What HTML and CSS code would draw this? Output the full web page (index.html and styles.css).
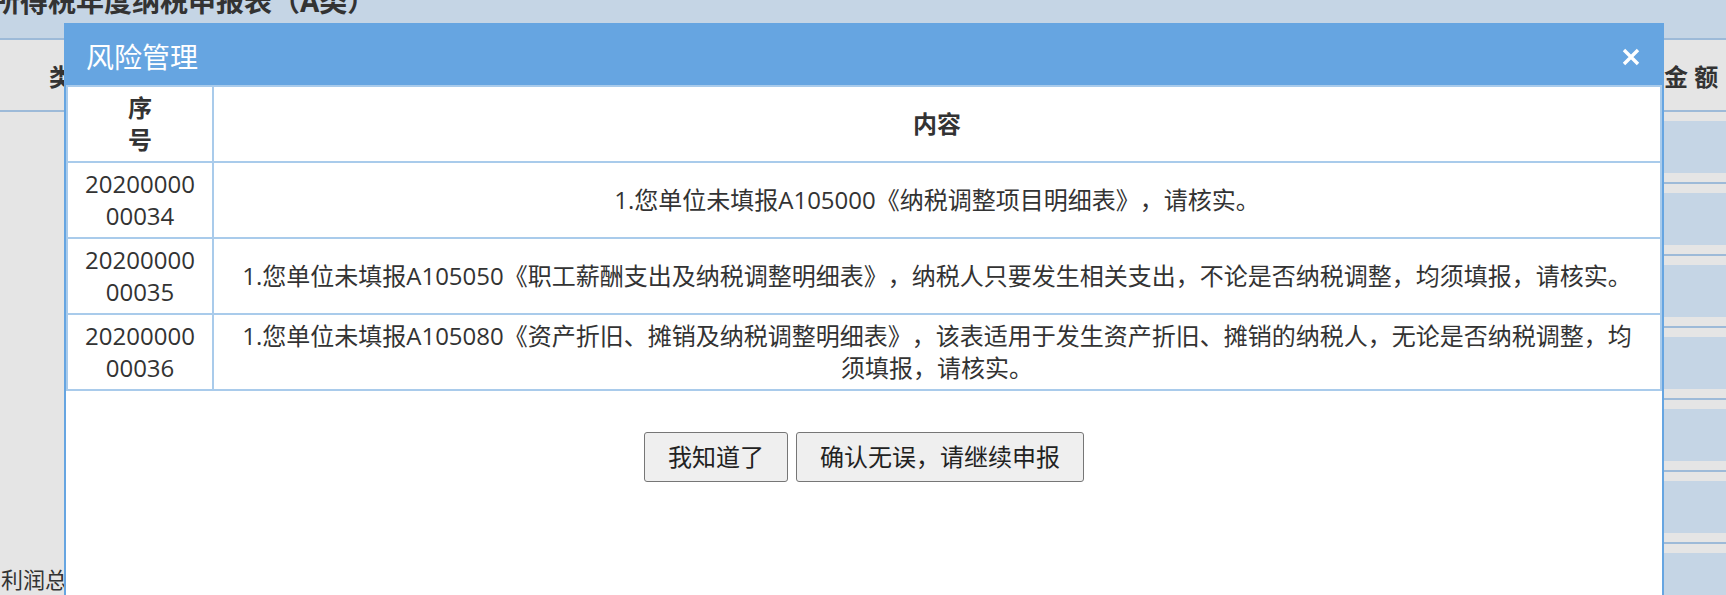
FILE: index.html
```html
<!DOCTYPE html>
<html lang="zh-CN">
<head>
<meta charset="utf-8">
<title>风险管理</title>
<link rel="stylesheet" href="styles.css">
</head>
<body>
<div class="page">
  <header class="topbar">
    <h1 class="doc-title">企业所得税年度纳税申报表（A类）</h1>
  </header>
  <section class="sheet">
    <div class="th th-cat">类别</div>
    <div class="th"></div>
    <div class="th th-amt">金 额</div>
    <div class="cat">利润总额计算</div>
    <div class="cell"><div class="field"></div></div><div class="cell"><div class="field"></div></div>
    <div class="cell"><div class="field"></div></div><div class="cell"><div class="field"></div></div>
    <div class="cell"><div class="field"></div></div><div class="cell"><div class="field"></div></div>
    <div class="cell"><div class="field"></div></div><div class="cell"><div class="field"></div></div>
    <div class="cell"><div class="field"></div></div><div class="cell"><div class="field"></div></div>
    <div class="cell"><div class="field"></div></div><div class="cell"><div class="field"></div></div>
    <div class="cell"><div class="field"></div></div><div class="cell"><div class="field"></div></div>
  </section>
</div>

<div class="modal" role="dialog" aria-labelledby="modal-title">
  <div class="modal-head">
    <span class="modal-title" id="modal-title">风险管理</span>
    <button class="close" type="button" aria-label="关闭">
      <svg viewBox="0 0 18 18" width="18" height="18" aria-hidden="true"><path d="M2 2 L16 16 M16 2 L2 16" stroke="#fff" stroke-width="3.4" fill="none"/></svg>
    </button>
  </div>
  <table class="risk">
    <thead>
      <tr><th class="no">序<br>号</th><th class="txt">内容</th></tr>
    </thead>
    <tbody>
      <tr><td class="no">2020000000034</td><td class="txt">1.您单位未填报A105000《纳税调整项目明细表》，请核实。</td></tr>
      <tr><td class="no">2020000000035</td><td class="txt">1.您单位未填报A105050《职工薪酬支出及纳税调整明细表》，纳税人只要发生相关支出，不论是否纳税调整，均须填报，请核实。</td></tr>
      <tr><td class="no">2020000000036</td><td class="txt">1.您单位未填报A105080《资产折旧、摊销及纳税调整明细表》，该表适用于发生资产折旧、摊销的纳税人，无论是否纳税调整，均须填报，请核实。</td></tr>
    </tbody>
  </table>
  <div class="actions">
    <button class="btn" type="button">我知道了</button>
    <button class="btn" type="button">确认无误，请继续申报</button>
  </div>
</div>
</body>
</html>
```

FILE: styles.css
```css
html, body {
  margin: 0;
  padding: 0;
}

body {
  width: 1726px;
  height: 595px;
  overflow: hidden;
  position: relative;
  background: #e5e5e5;
  color: #333;
  font-family: "Open Sans", "Noto Sans CJK SC", sans-serif;
  text-spacing-trim: space-all;
}

/* ---------- underlying page ---------- */
.page {
  height: 595px;
  overflow: hidden;
}

.topbar {
  height: 38px;
  background: #c5d5e5;
  overflow: hidden;
}

.doc-title {
  margin: -17px 0 0 0;
  font-size: 28px;
  line-height: 36px;
  font-weight: bold;
  white-space: nowrap;
  text-indent: -64px;
  color: #333;
}

.sheet {
  display: grid;
  grid-template-columns: 64px 1fr 62px;
  border-top: 2px solid #9dbad8;
}

.th {
  height: 70px;
  border-bottom: 2px solid #9dbad8;
  background: #e5e5e5;
  display: flex;
  align-items: center;
  font-size: 24px;
  font-weight: bold;
  white-space: nowrap;
  overflow: hidden;
}

.th-cat {
  padding-left: 49px;
}

.th-amt {
  padding-left: 0;
}

.cat {
  grid-column: 1;
  grid-row: 2 / span 7;
  background: #e5e5e5;
  padding: 451px 0 0 1px;
  font-size: 22px;
  line-height: 32px;
  white-space: nowrap;
  overflow: hidden;
}

.cell {
  padding: 9px 0;
  border-bottom: 2px solid #9dbad8;
  background: #e5e5e5;
}

.field {
  height: 52px;
  background: #c5d5e5;
}

/* ---------- modal ---------- */
.modal {
  position: absolute;
  left: 64px;
  top: 23px;
  width: 1600px;
  height: 572px;
  box-sizing: border-box;
  border-left: 2px solid #66a5e1;
  border-right: 2px solid #66a5e1;
  background: #fff;
}

.modal-head {
  height: 62px;
  box-sizing: border-box;
  padding: 6px 22px 0 20px;
  background: #66a5e1;
  display: flex;
  align-items: center;
  justify-content: space-between;
}

.modal-title {
  color: #fff;
  font-size: 28px;
  line-height: 36px;
}

.close {
  width: 18px;
  height: 18px;
  padding: 0;
  border: 0;
  background: none;
  display: block;
  cursor: pointer;
}

.close svg {
  display: block;
}

.risk {
  width: 100%;
  table-layout: fixed;
  border-collapse: separate;
  border-spacing: 0;
  border-top: 2px solid #a9cbeb;
  border-left: 2px solid #a9cbeb;
  font-size: 24px;
  line-height: 32px;
  color: #333;
}

.risk th,
.risk td {
  border-right: 2px solid #a9cbeb;
  border-bottom: 2px solid #a9cbeb;
  text-align: center;
  vertical-align: middle;
}

.risk th {
  font-weight: bold;
}

.risk .no {
  width: 146px;
  box-sizing: border-box;
  padding: 5px 14px;
  word-break: break-all;
}

.risk .txt {
  padding: 5px 20px;
}

.actions {
  display: flex;
  justify-content: center;
  gap: 8px;
  padding-top: 41px;
}

.btn {
  font-family: "Open Sans", "Noto Sans CJK SC", sans-serif;
  font-size: 24px;
  line-height: 32px;
  padding: 8px 23px;
  border: 1px solid #767676;
  border-radius: 3px;
  background: #efefef;
  color: #222;
  cursor: pointer;
}
```
